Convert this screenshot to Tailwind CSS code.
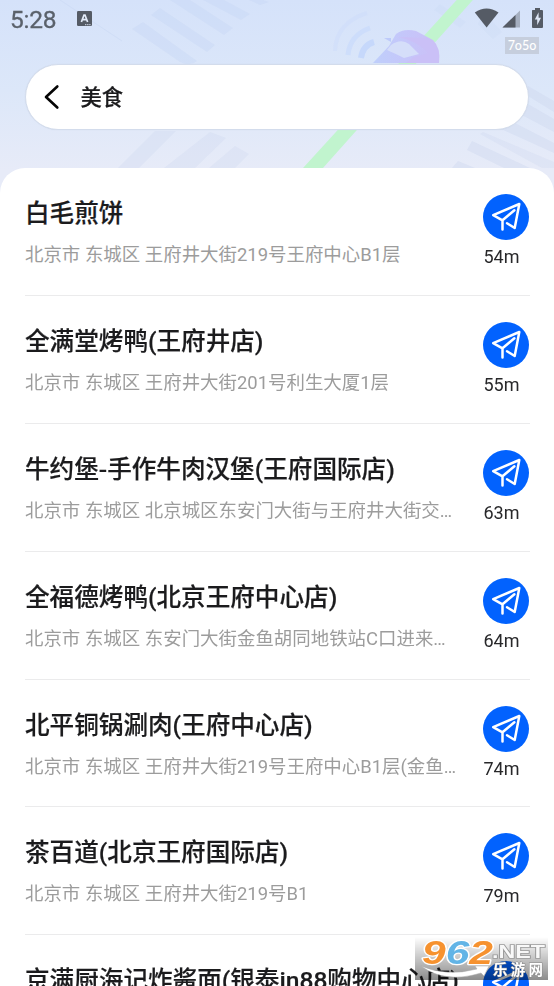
<!DOCTYPE html>
<html lang="zh-CN">
<head>
<meta charset="utf-8">
<title>美食</title>
<script src="https://cdn.jsdelivr.net/npm/@tailwindcss/browser@4"></script>
</head>
<body class="w-[554px] h-[986px] overflow-hidden bg-white font-[Roboto,'Noto_Sans_CJK_SC',sans-serif]">
<svg class="hidden">
  <symbol id="plane" viewBox="0 0 46 46">
    <circle cx="23" cy="23" r="23" fill="#0262fe"/>
    <path d="M19.500 35.500V26.300L10.200 21.200L36.300 10L31.700 34L24 29.200M19.500 26.300L31.400 16.300" fill="none" stroke="#fff" stroke-width="2.5" stroke-linecap="round" stroke-linejoin="round"/>
  </symbol>
</svg>
<div class="relative w-full h-full overflow-hidden flex flex-col">
  <svg class="absolute left-0 top-0" width="554" height="200" viewBox="0 0 554 200">
    <defs>
      <linearGradient id="sky" x1="0" y1="0" x2="0" y2="1"><stop offset="0" stop-color="#d5e2fa"/><stop offset=".45" stop-color="#dce7f9"/><stop offset=".85" stop-color="#e7ebf8"/></linearGradient>
      <linearGradient id="car" x1="0" y1="0" x2="1" y2="0"><stop offset="0" stop-color="#bfcffb"/><stop offset=".5" stop-color="#c5c6fa"/><stop offset="1" stop-color="#ccbff6"/></linearGradient>
    </defs>
    <rect width="554" height="200" fill="url(#sky)"/>
    <g fill="#c5d5f3" opacity=".36">
      <path d="M143 22L197 61Q190 67 180 62L132 29Z"/>
      <path d="M160 8L215 45L207 52L151 15Z"/>
      <path d="M181 -6L233 28L224 35L170 0Z"/>
      <path d="M198 -14L250 14L241 20L188 -8Z"/>
      <path d="M255 -3L269 2L260 5L249 0Z"/>
      <path d="M440 4L466 22L460 28L434 10Z" opacity=".45"/>
      <path d="M484 12L502 32L493 39L478 24Z" opacity=".5"/>
    </g>
    <g fill="#ccd6ee" opacity=".4">
      <path d="M118 168L155 131H176L139 168Z" opacity=".7"/><path d="M164 168L210 132L226 138L195 168Z" opacity=".75"/><path d="M209 168L235 146L249 154L235 168Z" opacity=".75"/>
      <path d="M528 86L554 101V112L528 96Z"/><path d="M528 104L554 119V132L520 114Z"/><path d="M505 118L554 143V153L490 124Z"/><path d="M472 141L530 168H504L467 150Z"/><path d="M483 132L554 162V168L542 168L480 134Z" opacity=".75"/><path d="M458 161L475 168H452Z"/>
    </g>
    <path d="M60 0L122 41" stroke="#cbdaf5" stroke-width="1" opacity=".6"/>
    <path d="M464 -8L303 168H323L480 -8Z" fill="#c1f4ce"/>
    <path d="M373 63L389 46L396 34Q404 28 416 31L433 40Q441 48 439 63Z" fill="url(#car)"/>
    <path d="M391 45Q401 38 409 44L419 54L404 58Q394 53 387 50Z" fill="#d5def9"/>
    <path d="M398 37Q415 40 429 53L414 57L406 63H439V53Q437 43 427 38Z" fill="#cac0f7"/>
    <path d="M384 38L391 38V42Z" fill="#bdcafa"/>
    <g fill="none" stroke="#c6d8fb" stroke-linecap="butt"><path d="M361 58Q363 45 374 42" stroke-width="6"/><path d="M348 55Q350 35 370 28" stroke-width="5" opacity=".6"/><path d="M335 51Q336 23 367 13" stroke-width="4" opacity=".3"/></g>
  </svg>

  <header class="relative h-[64px] shrink-0 flex items-start text-[#5a616b]">
    <span class="ml-[10px] mt-[5px] text-[24.500px] leading-[29px] tracking-[-0.200px] [-webkit-text-stroke:0.3px_#5a616b]">5:28</span>
    <svg class="ml-[21px] mt-[11px]" width="15" height="15" viewBox="0 0 15 15"><rect width="15" height="15" rx="1.2" fill="#555b65"/><path d="M4.4 11L7 4h1L10.6 11M5.5 8.7H9.5" fill="none" stroke="#e4ecfa" stroke-width="1.7"/><path d="M8 13.7H14" stroke="#d4ddec" stroke-width="1" stroke-dasharray="1.4 .7"/></svg>
    <svg class="absolute left-[474px] top-[7px]" width="72" height="23" viewBox="0 0 72 23">
      <path d="M.8 5.4Q12.500 -2.200 24.500 5.400L12.600 20.600Z" fill="#555b65"/>
      <path d="M28.500 20.600L46 3.500V20.600Z" fill="#a5afc0"/><path d="M28.500 20.600L41.500 7.900V20.600Z" fill="#555b65"/>
      <path d="M61 3H58.500Q58 3 58 4V20Q58 21 59 21H68Q69 21 69 20V4Q69 3 68 3H66V1H61Z" fill="#555b65"/><path d="M64.600 5.200L60.800 12.600H63.200V18.300L67 10.800H64.600Z" fill="#dfe7f6"/>
    </svg>
    <span class="absolute left-[505px] top-[37px] w-[34px] h-[17px] bg-[#c6cedd] text-white text-[12.500px] leading-[17px] text-center font-medium font-[Lato,sans-serif]">7o5o</span>
  </header>

  <div class="relative mx-[25px] h-[66px] w-[504px] shrink-0 rounded-full bg-white border border-[#d3dcec] shadow-[0_0_1px_#cbd4e5] flex items-center">
    <svg class="ml-[17px]" width="18" height="26" viewBox="0 0 18 26"><path d="M14.300 2.500L3 13L14.300 23.500" fill="none" stroke="#050505" stroke-width="2.600" stroke-linecap="round" stroke-linejoin="round"/></svg>
    <h1 class="ml-[19.500px] mt-[2px] text-[21.300px] leading-[32px] font-medium text-[#1b1b1d] [-webkit-text-stroke:0.2px_#1b1b1d]">美食</h1>
  </div>

  <main class="relative mt-[38px] flex-1 w-full rounded-t-[25px] bg-white pl-[25px] pr-[24px] overflow-hidden">
    <section class="h-[127.880px] flex justify-between border-b border-[#ebebec]">
      <div class="w-[432px] pt-[28px]"><h2 class="text-[24.600px] leading-[36px] font-medium text-[#1b1b1d] whitespace-nowrap [-webkit-text-stroke:0.2px_#1b1b1d]">白毛煎饼</h2><p class="mt-[9px] text-[18.450px] leading-[28px] text-[#9c9c9c] whitespace-nowrap">北京市 东城区 王府井大街219号王府中心B1层</p></div>
      <div class="w-[47px] pt-[26px] shrink-0"><svg width="46" height="46"><use href="#plane"/></svg><p class="mt-[5px] ml-[0.500px] text-[18px] leading-[24px] text-[#28282a]">54m</p></div>
    </section>
    <section class="h-[127.880px] flex justify-between border-b border-[#ebebec]">
      <div class="w-[432px] pt-[28px]"><h2 class="text-[24.600px] leading-[36px] font-medium text-[#1b1b1d] whitespace-nowrap [-webkit-text-stroke:0.2px_#1b1b1d]">全满堂烤鸭(王府井店)</h2><p class="mt-[9px] text-[18.450px] leading-[28px] text-[#9c9c9c] whitespace-nowrap">北京市 东城区 王府井大街201号利生大厦1层</p></div>
      <div class="w-[47px] pt-[26px] shrink-0"><svg width="46" height="46"><use href="#plane"/></svg><p class="mt-[5px] ml-[0.500px] text-[18px] leading-[24px] text-[#28282a]">55m</p></div>
    </section>
    <section class="h-[127.880px] flex justify-between border-b border-[#ebebec]">
      <div class="w-[432px] pt-[28px]"><h2 class="text-[24.600px] leading-[36px] font-medium text-[#1b1b1d] whitespace-nowrap [-webkit-text-stroke:0.2px_#1b1b1d]">牛约堡-手作牛肉汉堡(王府国际店)</h2><p class="mt-[9px] text-[18.450px] leading-[28px] text-[#9c9c9c] whitespace-nowrap">北京市 东城区 北京城区东安门大街与王府井大街交…</p></div>
      <div class="w-[47px] pt-[26px] shrink-0"><svg width="46" height="46"><use href="#plane"/></svg><p class="mt-[5px] ml-[0.500px] text-[18px] leading-[24px] text-[#28282a]">63m</p></div>
    </section>
    <section class="h-[127.880px] flex justify-between border-b border-[#ebebec]">
      <div class="w-[432px] pt-[28px]"><h2 class="text-[24.600px] leading-[36px] font-medium text-[#1b1b1d] whitespace-nowrap [-webkit-text-stroke:0.2px_#1b1b1d]">全福德烤鸭(北京王府中心店)</h2><p class="mt-[9px] text-[18.450px] leading-[28px] text-[#9c9c9c] whitespace-nowrap">北京市 东城区 东安门大街金鱼胡同地铁站C口进来…</p></div>
      <div class="w-[47px] pt-[26px] shrink-0"><svg width="46" height="46"><use href="#plane"/></svg><p class="mt-[5px] ml-[0.500px] text-[18px] leading-[24px] text-[#28282a]">64m</p></div>
    </section>
    <section class="h-[127.880px] flex justify-between border-b border-[#ebebec]">
      <div class="w-[432px] pt-[28px]"><h2 class="text-[24.600px] leading-[36px] font-medium text-[#1b1b1d] whitespace-nowrap [-webkit-text-stroke:0.2px_#1b1b1d]">北平铜锅涮肉(王府中心店)</h2><p class="mt-[9px] text-[18.450px] leading-[28px] text-[#9c9c9c] whitespace-nowrap">北京市 东城区 王府井大街219号王府中心B1层(金鱼…</p></div>
      <div class="w-[47px] pt-[26px] shrink-0"><svg width="46" height="46"><use href="#plane"/></svg><p class="mt-[5px] ml-[0.500px] text-[18px] leading-[24px] text-[#28282a]">74m</p></div>
    </section>
    <section class="h-[127.880px] flex justify-between border-b border-[#ebebec]">
      <div class="w-[432px] pt-[28px]"><h2 class="text-[24.600px] leading-[36px] font-medium text-[#1b1b1d] whitespace-nowrap [-webkit-text-stroke:0.2px_#1b1b1d]">茶百道(北京王府国际店)</h2><p class="mt-[9px] text-[18.450px] leading-[28px] text-[#9c9c9c] whitespace-nowrap">北京市 东城区 王府井大街219号B1</p></div>
      <div class="w-[47px] pt-[26px] shrink-0"><svg width="46" height="46"><use href="#plane"/></svg><p class="mt-[5px] ml-[0.500px] text-[18px] leading-[24px] text-[#28282a]">79m</p></div>
    </section>
    <section class="h-[127.880px] flex justify-between">
      <div class="w-[432px] pt-[28px]"><h2 class="text-[24.600px] leading-[36px] font-medium text-[#1b1b1d] whitespace-nowrap [-webkit-text-stroke:0.2px_#1b1b1d]">京满厨海记炸酱面(银泰in88购物中心店)</h2></div>
      <div class="w-[47px] pt-[26px] shrink-0"><svg width="46" height="46"><use href="#plane"/></svg></div>
    </section>
  </main>

  <div class="absolute left-[415px] top-[937px] w-[133px] h-[43px] bg-linear-to-b from-white/0 to-black/45">
    <svg class="overflow-visible" width="133" height="43" viewBox="0 0 133 43">
      <path d="M6 29Q32 40 62 32L60 29L74 29L69 39L66 36Q30 47 6 29Z" fill="#fff" stroke="#aaa" stroke-width=".5"/>
      <g font-family="Liberation Sans, sans-serif" font-weight="bold" font-style="italic" font-size="34" stroke="#fff" stroke-width="2.500" paint-order="stroke" stroke-linejoin="round">
        <text x="7" y="27" textLength="71" lengthAdjust="spacingAndGlyphs"><tspan fill="#f6922f">9</tspan><tspan fill="#62b4e6">6</tspan><tspan fill="#f6922f">2</tspan></text>
      </g>
      <text x="77" y="21" font-family="Liberation Sans, sans-serif" font-weight="bold" font-size="18" textLength="53" lengthAdjust="spacingAndGlyphs" fill="#f8f8f8" stroke="#999" stroke-width="1.600" paint-order="stroke">.NET</text>
      <text x="78" y="38" font-family="Noto Sans CJK SC, sans-serif" font-weight="bold" font-size="14.500" textLength="50" fill="#fff" stroke="#888" stroke-width="1" paint-order="stroke">乐游网</text>
    </svg>
  </div>
</div>
</body>
</html>
